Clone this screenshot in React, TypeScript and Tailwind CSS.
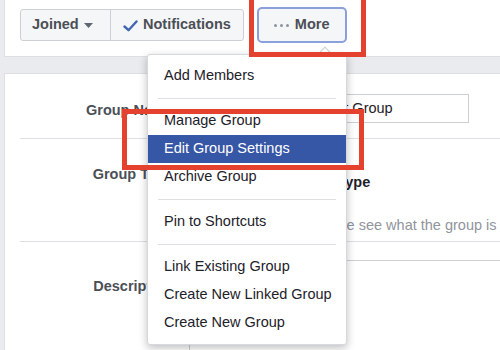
import React from "react";

const Sep = () => <div className="mx-[10px] my-[8px] h-px bg-[#dddfe2]" />;

const Item = ({ label, active = false }: { label: string; active?: boolean }) => (
  <div
    className={
      "h-[28px] flex items-center pl-[16px] text-[14.5px] " +
      (active ? "bg-[#3656a6] text-white" : "text-[#1d2129]")
    }
  >
    {label}
  </div>
);

export default function App() {
  return (
    <div className="relative w-[500px] h-[350px] overflow-hidden bg-[#e9ebee] font-['Liberation_Sans',Arial,sans-serif]">
      {/* header */}
      <div className="ml-[4px] h-[57px] bg-white border-l border-b border-[#dddfe2]">
        <div className="h-[50px] flex items-center pl-[15px]">
          <div className="flex h-[32px] rounded-[3px] border border-[#ccd0d5] bg-[#f5f6f7] text-[14.5px] font-bold text-[#4b4f56]">
            <div className="w-[89px] flex items-center pl-[11px]">
              <span>Joined</span>
              <svg width="9" height="5" viewBox="0 0 9 5" className="ml-[5px] mt-[1px]">
                <path d="M0 0 L9 0 L4.5 5 Z" fill="#606770" />
              </svg>
            </div>
            <div className="w-px bg-[#ccd0d5]" />
            <div className="flex items-center pl-[12px] pr-[12px]">
              <svg width="15" height="12" viewBox="0 0 15 12" className="mr-[5px] mt-[1px]">
                <path d="M1.5 6.5 L5.5 10.2 L13.5 1.5" fill="none" stroke="#4267b2" strokeWidth="2.4" strokeLinecap="round" strokeLinejoin="round" />
              </svg>
              <span>Notifications</span>
            </div>
          </div>
          <div className="ml-[13px] w-[90px] h-[36px] rounded-[5px] border-2 border-[#8b9fdb] bg-[#f5f6f7] flex items-center pl-[15px] text-[14.5px] font-bold text-[#4b4f56]">
            <div className="flex items-center gap-[3px] mr-[6px] mt-[1px]">
              <span className="w-[3px] h-[3px] rounded-full bg-[#8d949e]" />
              <span className="w-[3px] h-[3px] rounded-full bg-[#8d949e]" />
              <span className="w-[3px] h-[3px] rounded-full bg-[#8d949e]" />
            </div>
            <span>More</span>
          </div>
        </div>
      </div>

      {/* content card */}
      <div className="ml-[4px] mt-[16px] bg-white border-l border-t border-[#dddfe2] h-[300px]">
        <div className="ml-[15px] flex pt-[20px] pb-[15px] border-b border-[#dddfe2]">
          <div className="w-[153px] shrink-0 text-right text-[14.5px] font-bold text-[#4b4f56] pt-[6px]">Group Name</div>
          <div className="ml-[16px] w-[280px] shrink-0 h-[29px] border border-[#ccd0d5] flex items-center pl-[20px] text-[14.5px] text-[#1d2129] whitespace-nowrap overflow-hidden">
            Digital Marketing Test Group
          </div>
        </div>
        <div className="ml-[15px] flex h-[103px] border-b border-[#dddfe2]">
          <div className="w-[153px] shrink-0 text-right text-[14.5px] font-bold text-[#4b4f56] pt-[25px]">Group Type</div>
          <div className="ml-[16px] flex flex-col whitespace-nowrap">
            <div className="pt-[33px] pl-[8px] text-[14.5px] font-bold text-[#1d2129]">Choose Your Group Type</div>
            <div className="pt-[21px] -ml-[2px] text-[14.5px] text-[#90949c]">A group type helps people see what the group is about.</div>
          </div>
        </div>
        <div className="ml-[15px] flex">
          <div className="w-[153px] shrink-0 text-right text-[14.5px] font-bold text-[#4b4f56] pt-[34px]">Description</div>
          <div className="ml-[16px] mt-[18px] flex-1 h-[120px] border-l border-t border-[#ccd0d5]" />
        </div>
      </div>

      {/* menu caret */}
      <div className="absolute left-[319px] top-[49px] w-[12px] h-[12px] rotate-45 bg-white border-l border-t border-[#ccd0d5]" />

      {/* dropdown menu */}
      <div className="absolute left-[147px] top-[54px] w-[200px] py-[7px] bg-white rounded-[3px] border border-[#d5d8dc] shadow-[0_3px_8px_rgba(0,0,0,0.25)]">
        <Item label="Add Members" />
        <Sep />
        <Item label="Manage Group" />
        <Item label="Edit Group Settings" active />
        <Item label="Archive Group" />
        <Sep />
        <Item label="Pin to Shortcuts" />
        <Sep />
        <Item label="Link Existing Group" />
        <Item label="Create New Linked Group" />
        <Item label="Create New Group" />
      </div>

      {/* red highlight boxes */}
      <div className="absolute left-[249px] top-[-10px] w-[117px] h-[67px] border-[5px] border-[#e4412f]" />
      <div className="absolute left-[122px] top-[109px] w-[242px] h-[61px] border-[5px] border-[#e4412f]" />
    </div>
  );
}
